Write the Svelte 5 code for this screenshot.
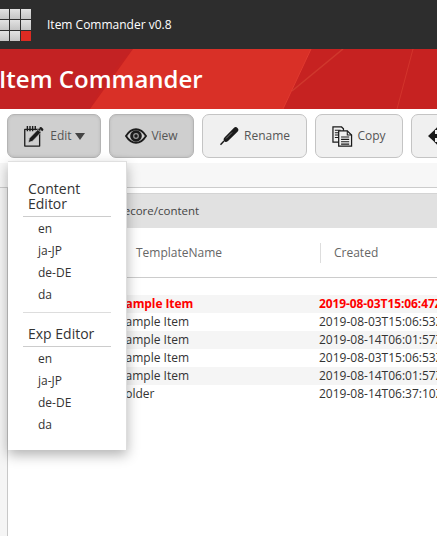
<script>
  const menus = [
    { title: 'Content Editor', items: ['en', 'ja-JP', 'de-DE', 'da'] },
    { title: 'Exp Editor', items: ['en', 'ja-JP', 'de-DE', 'da'] }
  ];
  const rows = [
    { name: 'Sample Item', created: '2019-08-03T15:06:47Z', hot: true },
    { name: 'Sample Item', created: '2019-08-03T15:06:53Z' },
    { name: 'Sample Item', created: '2019-08-14T06:01:57Z' },
    { name: 'Sample Item', created: '2019-08-03T15:06:53Z' },
    { name: 'Sample Item', created: '2019-08-14T06:01:57Z' },
    { name: 'Folder', created: '2019-08-14T06:37:10Z' }
  ];
  const cells = [0, 1, 2, 3, 4, 5, 6, 7, 8];
</script>

<div class="page">
  <header class="topbar">
    <div class="logo">
      {#each cells as c}
        <span class="cell" class:red={c === 8}></span>
      {/each}
    </div>
    <span class="app-name">Item Commander v0.8</span>
  </header>

  <section class="hero">
    <svg class="hero-art" viewBox="0 0 437 60" preserveAspectRatio="none" aria-hidden="true">
      <rect width="437" height="60" fill="#c62221" />
      <path d="M0 0H133Q106 26 90 60H0z" fill="#c32223" />
      <polygon points="133,0 311,0 283,60 90,60" fill="#d93027" />
      <line x1="343" y1="0" x2="292" y2="42" stroke="#d0382d" stroke-width="1.5" />
      <line x1="413" y1="0" x2="397" y2="60" stroke="#d2352c" stroke-width="1" />
      <line x1="311" y1="0" x2="283" y2="60" stroke="#e03a30" stroke-width="1" />
    </svg>
    <h1>Item Commander</h1>
  </section>

  <nav class="toolbar">
    <button class="tool active edit">
      <svg width="21" height="22" viewBox="0 0 24 25" aria-hidden="true">
        <path d="M2 5h17v19H2z" fill="none" stroke="#1c1c1c" stroke-width="1.500" stroke-linejoin="round" />
        <path d="M5 1v6M8 1v6M11 1v6M14 1v5" stroke="#1c1c1c" stroke-width="1.600" />
        <path d="M6 20l1.300-5L17 5l3.500 3.500-9.700 10z" fill="#1c1c1c" stroke="#cfcfcf" stroke-width=".8" />
        <path d="M18.400 3.600l1-1a1.300 1.300 0 0 1 1.800 0l1.700 1.700a1.300 1.300 0 0 1 0 1.800l-1 1z" fill="#1c1c1c" />
      </svg>
      <span>Edit</span>
      <i class="caret"></i>
    </button>
    <button class="tool active view">
      <svg width="22" height="16" viewBox="0 0 22 16" aria-hidden="true">
        <path d="M1 8c2.800-4.500 6.300-6.800 10-6.800S18.200 3.500 21 8c-2.800 4.500-6.300 6.800-10 6.800S3.800 12.500 1 8z" fill="none" stroke="#1c1c1c" stroke-width="1.900" />
        <circle cx="11" cy="8" r="5.800" fill="#1c1c1c" />
        <circle cx="11" cy="8" r="2.900" fill="#9a9a9a" />
        <circle cx="11" cy="8" r="1.700" fill="#1c1c1c" />
      </svg>
      <span>View</span>
    </button>
    <button class="tool rename">
      <svg width="20" height="20" viewBox="0 0 20 20" aria-hidden="true">
        <path d="M5.500 11.500L14.800 2a2.600 2.600 0 0 1 3.700 3.700L9 15c-1.500 1.300-3 1-3.800.2s-.9-2.300.3-3.700z" fill="#1a1a1a" />
        <path d="M5 15l-3.500 3.800" stroke="#1a1a1a" stroke-width="1.400" />
        <path d="M13 6.500l-6 6" stroke="#8a8a8a" stroke-width=".8" />
      </svg>
      <span>Rename</span>
    </button>
    <button class="tool copy">
      <svg width="21" height="21" viewBox="0 0 22 22" aria-hidden="true">
        <path d="M1 1h9l2 2v14H1z" fill="#f0f0f0" stroke="#1a1a1a" stroke-width="1.300" />
        <path d="M3 4.500h6M3 7h6M3 9.500h6M3 12h6" stroke="#1a1a1a" stroke-width="1.100" />
        <path d="M7 5h9l4.500 4.500V21H7z" fill="#f0f0f0" stroke="#1a1a1a" stroke-width="1.300" />
        <path d="M16 5v4.500h4.500" fill="none" stroke="#1a1a1a" stroke-width="1.100" />
        <path d="M9.500 11.500h8.500M9.500 14h8.500M9.500 16.500h8.500M9.500 19h8.500" stroke="#1a1a1a" stroke-width="1.200" />
      </svg>
      <span>Copy</span>
    </button>
    <button class="tool move">
      <svg width="24" height="24" viewBox="0 0 24 24" aria-hidden="true">
        <path d="M1 12l7-6.500V10h8V5.500l7 6.500-7 6.500V14H8v4.500z" fill="#1a1a1a" />
        <path d="M12 1l4.500 5h-3v12h3L12 23l-4.500-5h3V6h-3z" fill="#1a1a1a" />
      </svg>
    </button>
  </nav>

  <div class="searchbar"></div>

  <main class="workspace">
    <aside class="rail"></aside>
    <div class="content">
      <div class="crumb"><span>/sitecore/content</span></div>
      <div class="thead">
        <span class="th">TemplateName</span>
        <span class="th created"><span>Created</span></span>
      </div>
      <div class="tbody">
        {#each rows as row}
          <div class="row" class:hot={row.hot}>
            <span class="name">{row.name}</span>
            <span class="date">{row.created}</span>
          </div>
        {/each}
      </div>
    </div>
  </main>

  <div class="menu">
    {#each menus as menu, i}
      <div class="group" class:second={i === 1}>
        <div class="group-title">{menu.title}</div>
        <ul>
          {#each menu.items as item}
            <li>{item}</li>
          {/each}
        </ul>
      </div>
    {/each}
  </div>
</div>

<style>
  :global(body) {
    margin: 0;
    background: #fff;
  }
  .page {
    position: relative;
    width: 437px;
    height: 536px;
    overflow: hidden;
    font-family: "Open Sans", "Noto Sans", sans-serif;
    color: #333;
    background: #fff;
  }
  .topbar {
    height: 49px;
    background: #2d2d2d;
    display: flex;
    align-items: center;
    color: #fff;
  }
  .logo {
    display: grid;
    grid-template-columns: repeat(3, 10px);
    grid-auto-rows: 10px;
    gap: 1px;
    margin-left: -1px;
  }
  .cell {
    background: linear-gradient(#e2e2e2, #c4c4c4);
  }
  .cell.red {
    background: #dc2b22;
  }
  .app-name {
    margin-left: 16px;
    font-size: 12px;
    line-height: 16px;
  }
  .hero {
    position: relative;
    height: 60px;
    box-sizing: border-box;
    padding-bottom: 1px;
    display: flex;
    align-items: center;
    overflow: hidden;
  }
  .hero-art {
    position: absolute;
    inset: 0;
    width: 100%;
    height: 100%;
  }
  .hero h1 {
    position: relative;
    margin: 0 0 0 -1px;
    font-size: 24px;
    line-height: 32px;
    font-weight: 600;
    color: #fff;
  }
  .toolbar {
    height: 54px;
    box-sizing: border-box;
    padding: 5px 0 0 7px;
    display: flex;
    gap: 8px;
    overflow: hidden;
  }
  .tool {
    flex: none;
    height: 44px;
    box-sizing: border-box;
    display: flex;
    align-items: center;
    justify-content: center;
    gap: 4px;
    padding: 0;
    border: 1px solid #c4c4c4;
    border-radius: 7px;
    background: #f0f0f0;
    font: 12px/16px "Open Sans", "Noto Sans", sans-serif;
    color: #555;
  }
  .tool.active {
    background: #cfcfcf;
    border-color: #b4b4b4;
    box-shadow: inset 0 0 3px #b8b8b8;
  }
  .edit { width: 94px; gap: 6px; }
  .view { width: 85px; }
  .rename { width: 105px; gap: 5px; }
  .copy { width: 88px; }
  .move { width: 90px; justify-content: flex-start; padding-left: 15px; }
  .caret {
    width: 0;
    height: 0;
    margin-left: -3px;
    border-left: 5px solid transparent;
    border-right: 5px solid transparent;
    border-top: 7px solid #444;
  }
  .searchbar {
    height: 24px;
    background: #f7f7f7;
    border-bottom: 1px solid #ccc;
  }
  .workspace {
    height: 348px;
    display: flex;
  }
  .rail {
    width: 7px;
    flex: none;
    background: #f5f5f5;
    border-right: 1px solid #c8c8c8;
  }
  .content {
    flex: 1;
    min-width: 0;
    padding-top: 5px;
    overflow: hidden;
  }
  .crumb {
    height: 35px;
    padding: 0 0 2px 99px;
    display: flex;
    align-items: center;
    background: #e1e1e1;
    border-top: 1px solid #d4d4d4;
    box-sizing: border-box;
    font-size: 11.5px;
    color: #444;
  }
  .thead {
    height: 50px;
    box-sizing: border-box;
    border-bottom: 1px solid #ccc;
    display: grid;
    grid-template-columns: 312px 1fr;
    align-items: center;
    font-size: 12px;
    color: #666;
  }
  .th {
    padding-left: 128px;
  }
  .th.created {
    padding-left: 0;
    border-left: 1px solid #ddd;
    height: 20px;
    display: flex;
    align-items: center;
  }
  .th.created span {
    padding-left: 13px;
  }
  .tbody {
    padding-top: 17px;
  }
  .row {
    height: 18px;
    display: grid;
    grid-template-columns: 311px 1fr;
    font-size: 12px;
    line-height: 17px;
    color: #333;
    white-space: nowrap;
  }
  .row:nth-child(odd) {
    background: #f5f5f5;
  }
  .row.hot {
    color: #f00;
    font-weight: 700;
    letter-spacing: -0.1px;
  }
  .name {
    padding-left: 111px;
  }
  .menu {
    position: absolute;
    left: 8px;
    top: 161px;
    width: 119px;
    height: 289px;
    box-sizing: border-box;
    padding: 19px 15px 0;
    background: #fff;
    border-right: 1px solid #ddd;
    border-top: 1px solid #e0e0e0;
    box-shadow: 0 5px 12px rgba(0, 0, 0, 0.3);
  }
  .group-title {
    padding: 0 5px 5px;
    border-bottom: 1px solid #ccc;
    font-size: 14px;
    line-height: 15px;
    color: #333;
  }
  .group.second {
    margin-top: 6px;
    border-top: 1px solid #ddd;
    padding-top: 13px;
  }
  ul {
    list-style: none;
    margin: 0;
    padding: 1px 0 0 15px;
  }
  li {
    font-size: 12px;
    line-height: 22px;
    color: #333;
  }
</style>
